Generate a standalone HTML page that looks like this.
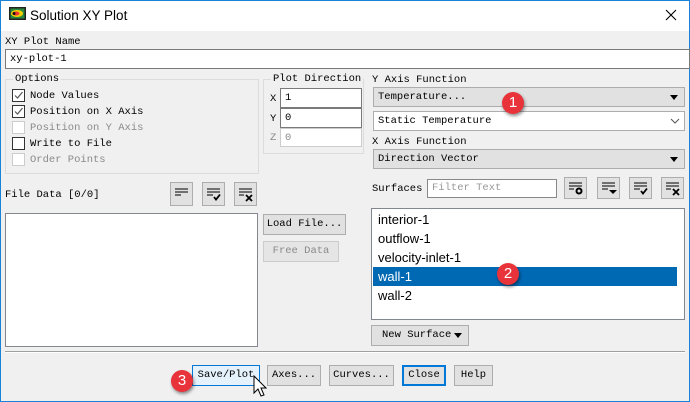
<!DOCTYPE html>
<html><head><meta charset="utf-8"><style>
*{box-sizing:border-box;margin:0;padding:0}
body{width:690px;height:402px;overflow:hidden;background:#f0f0f0;font-family:"Liberation Mono",monospace;font-size:10.5px;color:#000;position:relative}
.a{position:absolute;white-space:nowrap}
.win{position:absolute;left:0;top:0;width:690px;height:402px;border:1px solid #1883d7;}
.title{position:absolute;left:1px;top:1px;width:688px;height:30px;background:#fff}
.in{position:absolute;background:#fff;border:1px solid #7a7a7a;padding-left:4px;line-height:18px}
.grp{position:absolute;border:1px solid #dcdcdc}
.lbl{position:absolute;background:#f0f0f0;padding:0 2px;line-height:12px}
.cb{position:absolute;width:13px;height:13px;border:1px solid #333;background:#fff}
.cb.d{border-color:#ccc}
.txt{position:absolute;line-height:14px}
.g{color:#8a8a8a}
.btn{position:absolute;background:#e1e1e1;border:1px solid #adadad;text-align:center;line-height:19px}
.combo{position:absolute;background:#e1e1e1;border:1px solid #adadad;padding-left:4px;line-height:19px}
.tri{position:absolute;right:6px;top:7px;width:0;height:0;border-left:4px solid transparent;border-right:4px solid transparent;border-top:5px solid #000}
.ib{position:absolute;background:#e1e1e1;border:1px solid #adadad}
.badge{position:absolute;width:22px;height:22px;border-radius:50%;background:#e8333a;color:#fff;font-family:"Liberation Sans",sans-serif;font-size:15px;text-align:center;line-height:22px;box-shadow:1px 2px 3px rgba(0,0,0,.45)}
.li{position:absolute;left:6px;font-family:"Liberation Sans",sans-serif;font-size:13px;color:#000}
</style></head><body>
<div class="win"></div>
<div class="title">
 <svg class="a" style="left:8px;top:6px" width="17" height="13"><rect x="0" y="0" width="17" height="13" fill="#222"/><rect x="1.5" y="1.5" width="14" height="10" fill="#2b8a3e"/><ellipse cx="8" cy="6.5" rx="6" ry="3.5" fill="#f5d000"/><ellipse cx="7" cy="6.5" rx="3.5" ry="2" fill="#e33"/><circle cx="5" cy="6.5" r="1.5" fill="#111"/></svg>
 <div class="a" style="left:29px;top:7px;font-family:'Liberation Sans',sans-serif;font-size:13.5px">Solution XY Plot</div>
 <svg class="a" style="left:664px;top:8px" width="12" height="12"><path d="M1 1L11 11M11 1L1 11" stroke="#000" stroke-width="1.1"/></svg>
</div>
<div class="txt" style="left:5px;top:35px">XY Plot Name</div>
<div class="in" style="left:5px;top:49px;width:685px;height:20px">xy-plot-1</div>

<div class="grp" style="left:5px;top:79px;width:254px;height:95px"></div>
<div class="lbl" style="left:13px;top:73px">Options</div>
<div class="cb" style="left:12px;top:89px"><svg width="11" height="11" style="position:absolute;left:0;top:0"><path d="M2 5.5L4.5 8L9.5 2" stroke="#555" fill="none" stroke-width="1.2"/></svg></div>
<div class="txt" style="left:30px;top:89px">Node Values</div>
<div class="cb" style="left:12px;top:105px"><svg width="11" height="11" style="position:absolute;left:0;top:0"><path d="M2 5.5L4.5 8L9.5 2" stroke="#555" fill="none" stroke-width="1.2"/></svg></div>
<div class="txt" style="left:30px;top:105px">Position on X Axis</div>
<div class="cb d" style="left:12px;top:121px"></div>
<div class="txt g" style="left:30px;top:121px">Position on Y Axis</div>
<div class="cb" style="left:12px;top:137px"></div>
<div class="txt" style="left:30px;top:137px">Write to File</div>
<div class="cb d" style="left:12px;top:153px"></div>
<div class="txt g" style="left:30px;top:153px">Order Points</div>

<div class="grp" style="left:263px;top:79px;width:101px;height:75px"></div>
<div class="lbl" style="left:271px;top:73px">Plot Direction</div>
<div class="txt" style="left:270px;top:92px">X</div>
<div class="in" style="left:280px;top:88px;width:82px;height:20px">1</div>
<div class="txt" style="left:270px;top:112px">Y</div>
<div class="in" style="left:280px;top:108px;width:82px;height:20px">0</div>
<div class="txt g" style="left:270px;top:131px">Z</div>
<div class="in g" style="left:280px;top:128px;width:82px;height:19px;border-color:#ccc">0</div>

<div class="txt" style="left:372px;top:73px">Y Axis Function</div>
<div class="combo" style="left:373px;top:87px;width:312px;height:20px">Temperature...<div class="tri"></div></div>
<div class="in" style="left:373px;top:111px;width:312px;height:20px;border-color:#adadad">Static Temperature<svg style="position:absolute;right:4px;top:6px" width="10" height="6"><path d="M1 1L5 5L9 1" stroke="#555" fill="none"/></svg></div>
<div class="txt" style="left:372px;top:135px">X Axis Function</div>
<div class="combo" style="left:373px;top:149px;width:312px;height:20px">Direction Vector<div class="tri"></div></div>

<div class="txt" style="left:372px;top:182px">Surfaces</div>
<div class="in" style="left:427px;top:179px;width:130px;height:19px;color:#999;border-color:#888;line-height:17px">Filter Text</div>
<div class="ib" style="left:564px;top:177px;width:23px;height:22px"><svg width="21" height="20"><path d="M4 5h13M4 8h13M4 11h5" stroke="#000"/><circle cx="14" cy="13" r="2.5" fill="none" stroke="#000" stroke-width="2"/></svg></div>
<div class="ib" style="left:597px;top:177px;width:23px;height:22px"><svg width="21" height="20"><path d="M4 5h13M4 8h13M4 11h6" stroke="#000"/><path d="M11 12h8l-4 4z" fill="#000"/></svg></div>
<div class="ib" style="left:629px;top:177px;width:23px;height:22px"><svg width="21" height="20"><path d="M4 5h13M4 8h13M4 11h6" stroke="#000"/><path d="M11 13l2 2.5 4-5" stroke="#000" stroke-width="1.8" fill="none"/></svg></div>
<div class="ib" style="left:661px;top:177px;width:23px;height:22px"><svg width="21" height="20"><path d="M4 5h13M4 8h13M4 11h5" stroke="#000"/><path d="M11 11l6 6M17 11l-6 6" stroke="#000" stroke-width="1.8"/></svg></div>

<div class="txt" style="left:5px;top:188px">File Data [0/0]</div>
<div class="ib" style="left:170px;top:182px;width:23px;height:24px"><svg width="21" height="22"><path d="M4 6h13M4 9h13M4 12h6" stroke="#000"/></svg></div>
<div class="ib" style="left:202px;top:182px;width:23px;height:24px"><svg width="21" height="22"><path d="M4 6h13M4 9h13M4 12h6" stroke="#000"/><path d="M11 14l2 2.5 4-5" stroke="#000" stroke-width="1.8" fill="none"/></svg></div>
<div class="ib" style="left:234px;top:182px;width:23px;height:24px"><svg width="21" height="22"><path d="M4 6h13M4 9h13M4 12h5" stroke="#000"/><path d="M11 12l6 6M17 12l-6 6" stroke="#000" stroke-width="1.8"/></svg></div>

<div class="in" style="left:5px;top:213px;width:253px;height:134px;border-color:#828790"></div>
<div class="btn" style="left:263px;top:214px;width:83px;height:21px">Load File...</div>
<div class="btn g" style="left:263px;top:241px;width:76px;height:21px;background:#e5e5e5;border-color:#ccc">Free Data</div>

<div class="in" style="left:371px;top:208px;width:314px;height:112px;border-color:#828790;padding:0">
 <div class="li" style="top:2px">interior-1</div>
 <div class="li" style="top:21px">outflow-1</div>
 <div class="li" style="top:40px">velocity-inlet-1</div>
 <div style="position:absolute;left:1px;top:58px;width:304px;height:19px;background:#0069b4"></div>
 <div class="li" style="top:59px;color:#fff">wall-1</div>
 <div class="li" style="top:78px">wall-2</div>
</div>
<div class="btn" style="left:371px;top:325px;width:98px;height:21px;text-align:left;padding-left:10px">New Surface<div class="tri" style="top:7px"></div></div>

<div class="a" style="left:5px;top:351px;width:680px;height:2px;border-top:1px solid #a0a0a0;border-bottom:1px solid #fff"></div>

<div class="btn" style="left:192px;top:365px;width:68px;height:21px;background:#e5f1fb;border-color:#0078d7">Save/Plot</div>
<div class="btn" style="left:267px;top:365px;width:54px;height:21px">Axes...</div>
<div class="btn" style="left:329px;top:365px;width:65px;height:21px">Curves...</div>
<div class="btn" style="left:402px;top:365px;width:44px;height:21px;border:2px solid #0078d7;line-height:17px">Close</div>
<div class="btn" style="left:454px;top:365px;width:39px;height:21px">Help</div>

<svg class="a" style="left:253px;top:375px" width="14" height="24"><path d="M1 1L1 18L5 14L8 21L11 20L8 13L13 13Z" fill="#fff" stroke="#000" stroke-width="1"/></svg>

<div class="badge" style="left:502px;top:92px">1</div>
<div class="badge" style="left:497px;top:263px">2</div>
<div class="badge" style="left:171px;top:370px">3</div>
</body></html>
